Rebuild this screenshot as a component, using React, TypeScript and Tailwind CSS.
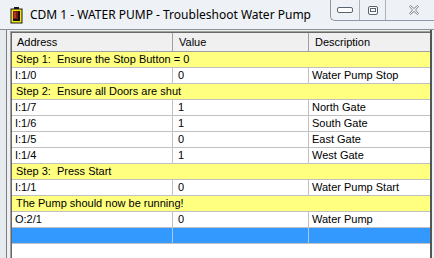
import React from "react";

type Row =
  | { kind: "step"; text: string }
  | { kind: "data"; addr: string; value: string; desc: string }
  | { kind: "selected" };

const rows: Row[] = [
  { kind: "step", text: "Step 1:  Ensure the Stop Button = 0" },
  { kind: "data", addr: "I:1/0", value: "0", desc: "Water Pump Stop" },
  { kind: "step", text: "Step 2:  Ensure all Doors are shut" },
  { kind: "data", addr: "I:1/7", value: "1", desc: "North Gate" },
  { kind: "data", addr: "I:1/6", value: "1", desc: "South Gate" },
  { kind: "data", addr: "I:1/5", value: "0", desc: "East Gate" },
  { kind: "data", addr: "I:1/4", value: "1", desc: "West Gate" },
  { kind: "step", text: "Step 3:  Press Start" },
  { kind: "data", addr: "I:1/1", value: "0", desc: "Water Pump Start" },
  { kind: "step", text: "The Pump should now be running!" },
  { kind: "data", addr: "O:2/1", value: "0", desc: "Water Pump" },
  { kind: "selected" },
];

function AppIcon() {
  return (
    <svg width="13" height="17" viewBox="0 0 13 17">
      <rect x="4" y="0" width="5" height="2" fill="#1a1a1a" />
      <rect x="0.5" y="1.5" width="12" height="15" fill="#1a1a1a" />
      <rect x="1.5" y="2.5" width="10" height="13" fill="#f5e60a" />
      <rect x="3" y="4" width="7" height="10" fill="#111" />
      <rect x="3" y="4" width="5" height="8" fill="#7a1c14" />
      <rect x="4" y="5" width="2" height="6" fill="#b0382a" />
    </svg>
  );
}

function CaptionButtons() {
  return (
    <div className="ml-auto flex h-[21px] w-[104px] self-start rounded-bl-[5px] border-b border-l border-[#8d96a3] bg-[#eef1f5]">
      <div className="flex w-[29px] items-center justify-center border-r border-[#aab2bd]">
        <svg width="16" height="6" viewBox="0 0 16 6">
          <rect x="0.5" y="0.5" width="15" height="5" rx="1.5" fill="#fdfdfd" stroke="#5a6370" />
        </svg>
      </div>
      <div className="flex w-[26px] items-center justify-center border-r border-[#aab2bd]">
        <svg width="10" height="9" viewBox="0 0 10 9">
          <rect x="0.5" y="0.5" width="9" height="8" rx="1.5" fill="#fdfdfd" stroke="#5a6370" />
          <rect x="2.5" y="2.5" width="5" height="3" fill="none" stroke="#5a6370" />
        </svg>
      </div>
      <div className="flex flex-1 items-center justify-start pl-[23px]">
        <svg width="10" height="10" viewBox="0 0 10 10">
          <path
            d="M0.5 1.5 L1.5 0.5 L5 3.5 L8.5 0.5 L9.5 1.5 L6.5 5 L9.5 8.5 L8.5 9.5 L5 6.5 L1.5 9.5 L0.5 8.5 L3.5 5 Z"
            fill="#f7f7f7"
            stroke="#7d8590"
            strokeWidth="1"
            strokeLinejoin="round"
          />
        </svg>
      </div>
    </div>
  );
}

export default function App() {
  const cell = "whitespace-pre text-[11px] leading-[15px] text-black";
  return (
    <div
      className="flex h-[258px] w-[434px] flex-col overflow-hidden bg-[#eef2f6]"
      style={{ fontFamily: '"Liberation Sans", Arial, sans-serif' }}
    >
      {/* title bar */}
      <div className="flex h-[29px] shrink-0 items-start">
        <div className="ml-[10px] mt-[7px]">
          <AppIcon />
        </div>
        <span
          className="ml-[7px] mt-[7px] whitespace-pre text-[12px] leading-[16px] text-black"
          style={{ fontFamily: '"Noto Sans", sans-serif' }}
        >
          CDM 1 - WATER PUMP - Troubleshoot Water Pump
        </span>
        <CaptionButtons />
      </div>

      {/* body */}
      <div className="flex flex-1 border-t border-[#8b8f96]">
        <div className="w-[7px] shrink-0 border-r border-[#7c7f85] bg-[#e6ebf0]" />
        <div className="flex flex-1 flex-col border-l-[3px] border-t border-[#f0f0f0] bg-[#f0f0f0]">
          <div className="flex flex-1 flex-col border-l border-t border-[#a0a0a0]">
            <div className="flex flex-1 flex-col border-l border-t border-[#696969] bg-white">
              {/* header */}
              <div className="flex h-[19px] shrink-0 border-b border-[#a0a0a0] bg-[#f0f0f0]">
                <div className="flex w-[161px] items-center border-r border-[#a0a0a0] pl-[5px]">
                  <span className={cell}>Address</span>
                </div>
                <div className="flex w-[136px] items-center border-r border-[#a0a0a0] pl-[6px]">
                  <span className={cell}>Value</span>
                </div>
                <div className="flex flex-1 items-center pl-[6px]">
                  <span className={cell}>Description</span>
                </div>
              </div>
              {rows.map((r, i) => {
                if (r.kind === "step") {
                  return (
                    <div
                      key={i}
                      className="flex h-[16px] shrink-0 items-center border-b border-[#c0c0c0] bg-[#ffff80] pl-[4px]"
                    >
                      <span className={cell}>{r.text}</span>
                    </div>
                  );
                }
                if (r.kind === "selected") {
                  return (
                    <div key={i} className="flex h-[16px] shrink-0 border-b border-[#c0c0c0] bg-[#3399ff]">
                      <div className="w-[161px] border-r border-[#a9c9ec]" />
                      <div className="w-[136px] border-r border-[#a9c9ec]" />
                      <div className="flex-1" />
                    </div>
                  );
                }
                return (
                  <div key={i} className="flex h-[16px] shrink-0 border-b border-[#c0c0c0] bg-white">
                    <div className="flex w-[161px] items-center border-r border-[#c0c0c0] pl-[3px]">
                      <span className={cell}>{r.addr}</span>
                    </div>
                    <div className="flex w-[136px] items-center border-r border-[#c0c0c0] pl-[5px]">
                      <span className={cell}>{r.value}</span>
                    </div>
                    <div className="flex flex-1 items-center pl-[3px]">
                      <span className={cell}>{r.desc}</span>
                    </div>
                  </div>
                );
              })}
            </div>
          </div>
        </div>
        <div className="w-[4px] shrink-0 border-l-2 border-[#555]" />
      </div>
    </div>
  );
}
